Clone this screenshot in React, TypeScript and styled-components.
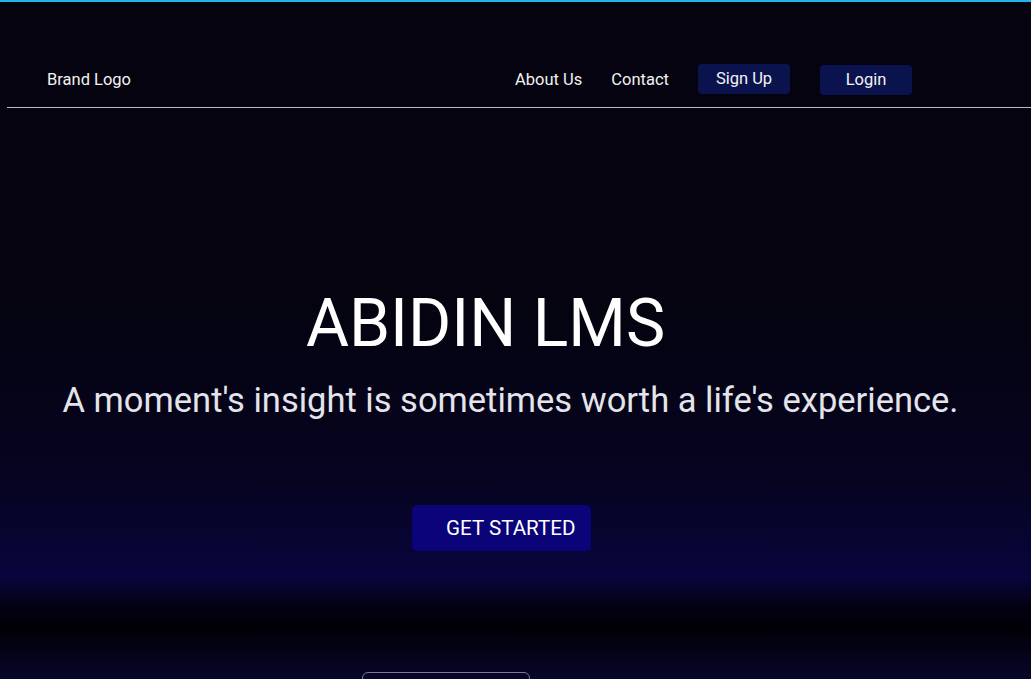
import React from "react";
import styled, { createGlobalStyle } from "styled-components";

const Global = createGlobalStyle`
  html, body { margin: 0; padding: 0; }
  body {
    font-family: Roboto, "Noto Sans", "Liberation Sans", sans-serif;
    background: #04030f;
    overflow: hidden;
  }
`;

const Page = styled.div`
  width: 1031px;
  height: 679px;
  overflow: hidden;
  border-top: 2px solid #1fb4ea;
  box-sizing: border-box;
  background: linear-gradient(
    to bottom,
    #04030f 0px,
    #04030f 300px,
    #060420 480px,
    #08053e 575px,
    #030218 600px,
    #010006 625px,
    #040318 650px,
    #08052c 679px
  );
  color: #fff;
  display: flex;
  flex-direction: column;
`;

const Header = styled.header`
  flex-shrink: 0;
  margin-left: 7px;
  height: 106px;
  border-bottom: 1px solid #b9b9c0;
  display: flex;
  align-items: flex-start;
  padding: 62px 0 0 40px;
  box-sizing: border-box;
`;

const Brand = styled.div`
  font-size: 16.5px;
  line-height: 31px;
  color: #f2f2f2;
  flex: 1;
`;

const Nav = styled.nav`
  display: flex;
  align-items: center;
  height: 31px;
  margin-right: 119px;
`;

const NavLink = styled.a`
  font-size: 16.5px;
  color: #f2f2f2;
  margin-right: 29px;
  text-decoration: none;
`;

const NavButton = styled.button<{ $dy?: number; $ml?: number }>`
  width: 92px;
  height: 30px;
  border: none;
  border-radius: 4px;
  background: #0b134f;
  color: #f2f2f2;
  font-family: inherit;
  font-size: 16.5px;
  margin-left: ${(p) => p.$ml ?? 0}px;
  transform: translateY(${(p) => p.$dy ?? 0}px);
  padding: 0;
`;

const Hero = styled.main`
  flex-shrink: 0;
  display: flex;
  flex-direction: column;
  align-items: center;
  padding-top: 176px;
`;

const Title = styled.h1`
  margin: 0 60px 0 0;
  font-size: 66px;
  font-weight: 400;
  line-height: 80px;
  color: #fff;
`;

const Subtitle = styled.p`
  margin: 14px 10px 0 0;
  font-size: 34.5px;
  line-height: 44px;
  color: #e4e4ea;
`;

const CTA = styled.button`
  margin: 83px 28px 0 0;
  width: 179px;
  height: 46px;
  border: none;
  border-radius: 5px;
  background: #0a0478;
  color: #fff;
  font-family: inherit;
  font-size: 20.6px;
  padding: 0 10px 0 34px;
  text-align: left;
  white-space: nowrap;
`;

const Outline = styled.div`
  margin: 121px 0 0 -139px;
  width: 168px;
  height: 30px;
  border: 1px solid #7a7894;
  border-radius: 6px;
  box-sizing: border-box;
`;

export default function App() {
  return (
    <>
      <Global />
      <Page>
        <Header>
          <Brand>Brand Logo</Brand>
          <Nav>
            <NavLink>About Us</NavLink>
            <NavLink>Contact</NavLink>
            <NavButton $dy={-1}>Sign Up</NavButton>
            <NavButton $ml={30}>Login</NavButton>
          </Nav>
        </Header>
        <Hero>
          <Title>ABIDIN LMS</Title>
          <Subtitle>A moment's insight is sometimes worth a life's experience.</Subtitle>
          <CTA>GET STARTED</CTA>
          <Outline />
        </Hero>
      </Page>
    </>
  );
}
